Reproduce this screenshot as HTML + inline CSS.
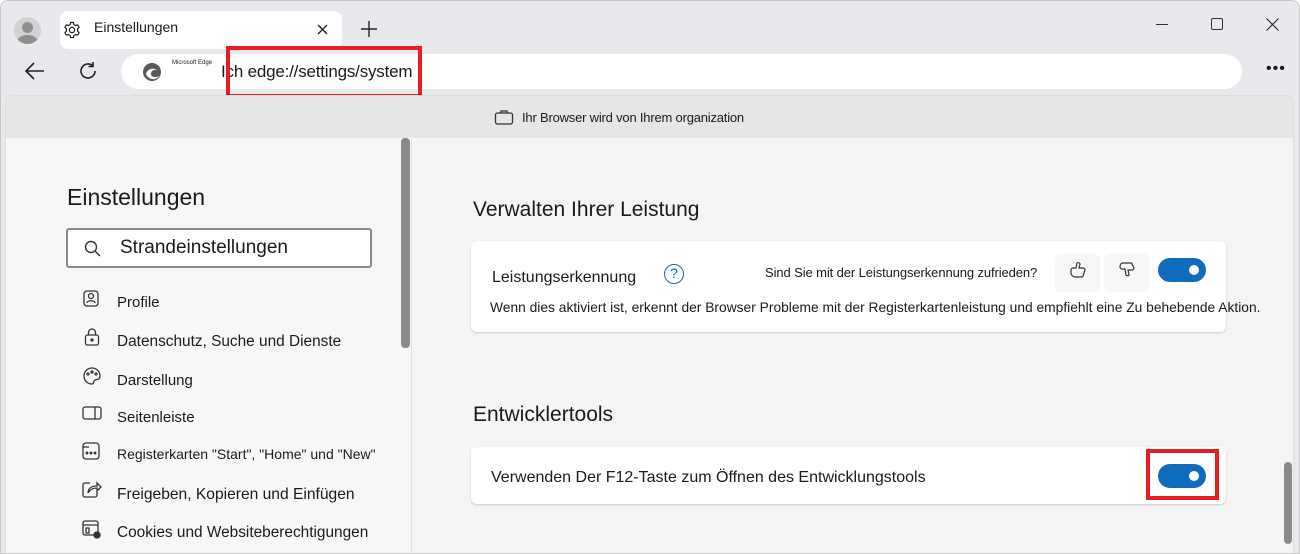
<!DOCTYPE html>
<html><head><meta charset="utf-8"><style>
*{margin:0;padding:0;box-sizing:border-box}
body{width:1300px;height:554px;overflow:hidden;background:#fff;font-family:"Liberation Sans",sans-serif;color:#1a1a1a;position:relative}
.win{position:absolute;left:0;top:0;width:1300px;height:554px;background:#e8e9ed;border-radius:8px 8px 0 0}
.frame{position:absolute;left:0;top:0;width:1300px;height:554px;border:1px solid #c8c8c8;border-radius:8px 8px 0 0;pointer-events:none}
.abs{position:absolute}
.t{position:absolute;white-space:nowrap}
.card{position:absolute;background:#fff;border-radius:6px;box-shadow:0 1px 2px rgba(0,0,0,.18)}
.tog{position:absolute;width:48px;height:24px;border-radius:12px;background:#0f6cbd}
.tog::after{content:"";position:absolute;right:7px;top:7px;width:10px;height:10px;border-radius:50%;background:#fff}
.nav{position:absolute;left:117px;font-size:15px}
</style></head><body>
<div class="win">
 <div class="abs" style="left:14px;top:17px;width:27px;height:27px;border-radius:50%;background:#d2d2d2;overflow:hidden">
  <div class="abs" style="left:8px;top:5px;width:11px;height:11px;border-radius:50%;background:#8f8f8f"></div>
  <div class="abs" style="left:3px;top:18px;width:21px;height:14px;border-radius:50%;background:#8f8f8f"></div>
 </div>
 <div class="abs" style="left:60px;top:11px;width:282px;height:38px;background:#fff;border-radius:8px"></div>
 <svg class="abs" style="left:62px;top:20px" width="20" height="20" viewBox="0 0 20 20" fill="none" stroke="#222" stroke-width="1.2"><circle cx="10" cy="10" r="2.6"/><path d="M8.6 2.5h2.8l.5 2 1.8 1 2-.6 1.4 2.4-1.5 1.5v2.4l1.5 1.5-1.4 2.4-2-.6-1.8 1-.5 2H8.6l-.5-2-1.8-1-2 .6-1.4-2.4 1.5-1.5V8.8L2.9 7.3l1.4-2.4 2 .6 1.8-1z"/></svg>
 <div class="t" style="left:94px;top:19px;font-size:14px">Einstellungen</div>
 <svg class="abs" style="left:317px;top:24px" width="11" height="11" viewBox="0 0 11 11" stroke="#222" stroke-width="1.4"><path d="M1 1l9 9M10 1l-9 9"/></svg>
 <svg class="abs" style="left:360px;top:20px" width="18" height="18" viewBox="0 0 18 18" stroke="#222" stroke-width="1.4"><path d="M9 1v16M1 9h16"/></svg>
 <div class="abs" style="left:1156px;top:24px;width:12px;height:1px;background:#333"></div>
 <div class="abs" style="left:1211px;top:18px;width:12px;height:12px;border:1px solid #333;border-radius:2px"></div>
 <svg class="abs" style="left:1266px;top:18px" width="13" height="13" viewBox="0 0 13 13" stroke="#222" stroke-width="1.1"><path d="M.5.5l12 12M12.5.5l-12 12"/></svg>
 <svg class="abs" style="left:24px;top:61px" width="22" height="20" viewBox="0 0 22 20" fill="none" stroke="#222" stroke-width="1.6"><path d="M20 10H3M10 2L2 10l8 8"/></svg>
 <svg class="abs" style="left:77px;top:60px" width="22" height="22" viewBox="0 0 22 22" fill="none" stroke="#222" stroke-width="1.6"><path d="M18 11a7 7 0 1 1-2.2-5.1M16 2v4.5h-4.5"/></svg>
 <div class="abs" style="left:121px;top:54px;width:1121px;height:35px;background:#fff;border-radius:18px"></div>
 <svg class="abs" style="left:141px;top:61px" width="22" height="22" viewBox="0 0 22 22"><circle cx="11" cy="11" r="9" fill="#5a5a5a"/><path d="M5 13c1-5 7-7 11-4-3-1-6 1-6 4s4 4 8 2c-2 4-10 5-13-2z" fill="#fff"/></svg>
 <div class="t" style="left:172px;top:60px;font-size:6px">Microsoft Edge</div>
 <div class="t" style="left:221px;top:62px;font-size:17px;letter-spacing:-.2px">Ich edge://settings/system</div>
 <div class="abs" style="left:226px;top:46px;width:196px;height:52px;border:4px solid #e81c25"></div>
 <div class="t" style="left:1266px;top:60px;font-size:16px;letter-spacing:1px">•••</div>
 <div class="abs" style="left:5px;top:95px;width:1289px;height:459px;background:#f7f7f7;border-radius:8px 8px 0 0;overflow:hidden;border:1px solid #dedede">
  <div class="abs" style="left:0;top:0;width:1289px;height:42px;background:#e6e6e6"></div>
  <svg class="abs" style="left:488px;top:12px" width="20" height="18" viewBox="0 0 20 18" fill="none" stroke="#333" stroke-width="1.3"><rect x="1.5" y="5" width="17" height="11" rx="2"/><path d="M7 5V3h6v2"/></svg>
  <div class="t" style="left:516px;top:14px;font-size:13px;letter-spacing:-.2px">Ihr Browser wird von Ihrem organization</div>
  <div class="abs" style="left:405px;top:42px;width:1px;height:420px;background:#e0e0e0"></div>
  <div class="abs" style="left:406px;top:42px;width:890px;height:420px;background:#f5f5f5"></div>
  <div class="abs" style="left:395px;top:42px;width:9px;height:210px;background:#8a8a8a;border-radius:4px"></div>
  <div class="abs" style="left:1278px;top:366px;width:8px;height:82px;background:#8a8a8a;border-radius:4px"></div>
 </div>
 <div class="t" style="left:67px;top:184px;font-size:23px">Einstellungen</div>
 <div class="abs" style="left:66px;top:228px;width:306px;height:40px;border:2px solid #8a8a8a;border-radius:3px;background:#fff"></div>
 <svg class="abs" style="left:84px;top:240px" width="18" height="18" viewBox="0 0 18 18" fill="none" stroke="#333" stroke-width="1.4"><circle cx="7" cy="7" r="5.5"/><path d="M11 11l5 5"/></svg>
 <div class="t" style="left:120px;top:237px;font-size:19px">Strandeinstellungen</div>
 <svg class="abs" style="left:83px;top:290px" width="18" height="18" viewBox="0 0 18 18" fill="none" stroke="#333" stroke-width="1.3"><rect x="1" y="1" width="14" height="15" rx="3"/><circle cx="8" cy="6" r="2.5"/><path d="M4 13c0-3 8-3 8 0"/></svg>
 <div class="nav" style="top:294px">Profile</div>
 <svg class="abs" style="left:84px;top:328px" width="16" height="18" viewBox="0 0 16 18" fill="none" stroke="#333" stroke-width="1.3"><rect x="1.5" y="7" width="13" height="10" rx="2"/><path d="M4.5 7V4.5a3.5 3.5 0 0 1 7 0V7"/><circle cx="8" cy="12" r="1" fill="#333"/></svg>
 <div class="nav" style="top:333px;font-size:15.4px">Datenschutz, Suche und Dienste</div>
 <svg class="abs" style="left:82px;top:366px" width="20" height="20" viewBox="0 0 20 20" fill="none" stroke="#333" stroke-width="1.3"><path d="M10 2a8 8 0 1 0 0 16c2 0 1-3 3-4s5 0 5-4a8 8 0 0 0-8-8z"/><circle cx="6" cy="8" r="1"/><circle cx="10" cy="6" r="1"/><circle cx="14" cy="8" r="1"/></svg>
 <div class="nav" style="top:372px">Darstellung</div>
 <svg class="abs" style="left:82px;top:405px" width="20" height="16" viewBox="0 0 20 16" fill="none" stroke="#333" stroke-width="1.3"><rect x="1" y="2" width="18" height="12" rx="2"/><path d="M13 2v12"/></svg>
 <div class="nav" style="top:409px">Seitenleiste</div>
 <svg class="abs" style="left:82px;top:442px" width="18" height="18" viewBox="0 0 18 18" fill="none" stroke="#333" stroke-width="1.3"><rect x="1" y="1" width="16" height="16" rx="3"/><path d="M1 5h6"/><circle cx="5" cy="11" r=".8" fill="#333"/><circle cx="9" cy="11" r=".8" fill="#333"/><circle cx="13" cy="11" r=".8" fill="#333"/></svg>
 <div class="nav" style="top:446px;font-size:14px">Registerkarten "Start", "Home" und "New"</div>
 <svg class="abs" style="left:82px;top:480px" width="20" height="18" viewBox="0 0 20 18" fill="none" stroke="#333" stroke-width="1.3"><path d="M8 3H3a2 2 0 0 0-2 2v10a2 2 0 0 0 2 2h10a2 2 0 0 0 2-2v-3"/><path d="M6 13c0-5 4-7 9-7V3l4 4-4 4V8c-4 0-7 1-9 5z"/></svg>
 <div class="nav" style="top:486px;font-size:15.6px">Freigeben, Kopieren und Einfügen</div>
 <svg class="abs" style="left:82px;top:520px" width="20" height="20" viewBox="0 0 20 20" fill="none" stroke="#333" stroke-width="1.3"><rect x="1" y="1" width="15" height="14" rx="2"/><path d="M1 5h15M4 8h3v5H4z"/><circle cx="15" cy="15" r="3" fill="#333"/></svg>
 <div class="nav" style="top:524px;font-size:15.4px">Cookies und Websiteberechtigungen</div>
 <div class="t" style="left:473px;top:198px;font-size:21px">Verwalten Ihrer Leistung</div>
 <div class="card" style="left:471px;top:241px;width:755px;height:91px"></div>
 <div class="t" style="left:492px;top:269px;font-size:16px">Leistungserkennung</div>
 <div class="abs" style="left:664px;top:264px;width:20px;height:20px;border:1.6px solid #0f6cbd;border-radius:50%;color:#0f6cbd;font-size:14px;text-align:center;line-height:17px">?</div>
 <div class="t" style="left:765px;top:265px;font-size:13px;letter-spacing:-.1px">Sind Sie mit der Leistungserkennung zufrieden?</div>
 <div class="abs" style="left:1055px;top:254px;width:45px;height:38px;background:#f7f7f7;border-radius:5px"></div>
 <div class="abs" style="left:1104px;top:254px;width:45px;height:38px;background:#f7f7f7;border-radius:5px"></div>
 <svg class="abs" style="left:1069px;top:261px" width="18" height="18" viewBox="0 0 18 18" fill="none" stroke="#333" stroke-width="1.2"><path d="M2 9c0-1 1-2 2-2h3l1-5c1-1 3 0 3 1l-1 4h4c1 0 2 1 2 2l-2 6c0 1-1 1-2 1H6c-2 0-4-2-4-4z"/></svg>
 <svg class="abs" style="left:1118px;top:261px" width="18" height="18" viewBox="0 0 18 18" fill="none" stroke="#333" stroke-width="1.2"><path d="M2 6c0 1 1 2 2 2h3l1 6c1 1 3 1 3 0l-1-5h4c1 0 2-1 2-2l-2-4c0-1-1-1-2-1H5C3 2 2 4 2 6z"/></svg>
 <div class="tog" style="left:1158px;top:258px"></div>
 <div class="t" style="left:490px;top:300px;font-size:13.8px">Wenn dies aktiviert ist, erkennt der Browser Probleme mit der Registerkartenleistung und empfiehlt eine Zu behebende Aktion.</div>
 <div class="t" style="left:473px;top:403px;font-size:21px">Entwicklertools</div>
 <div class="card" style="left:471px;top:447px;width:755px;height:57px"></div>
 <div class="t" style="left:491px;top:469px;font-size:16px">Verwenden Der F12-Taste zum Öffnen des Entwicklungstools</div>
 <div class="tog" style="left:1158px;top:464px"></div>
 <div class="abs" style="left:1146px;top:449px;width:73px;height:51px;border:4px solid #e81c25"></div>
</div>
<div class="frame"></div>
</body></html>
